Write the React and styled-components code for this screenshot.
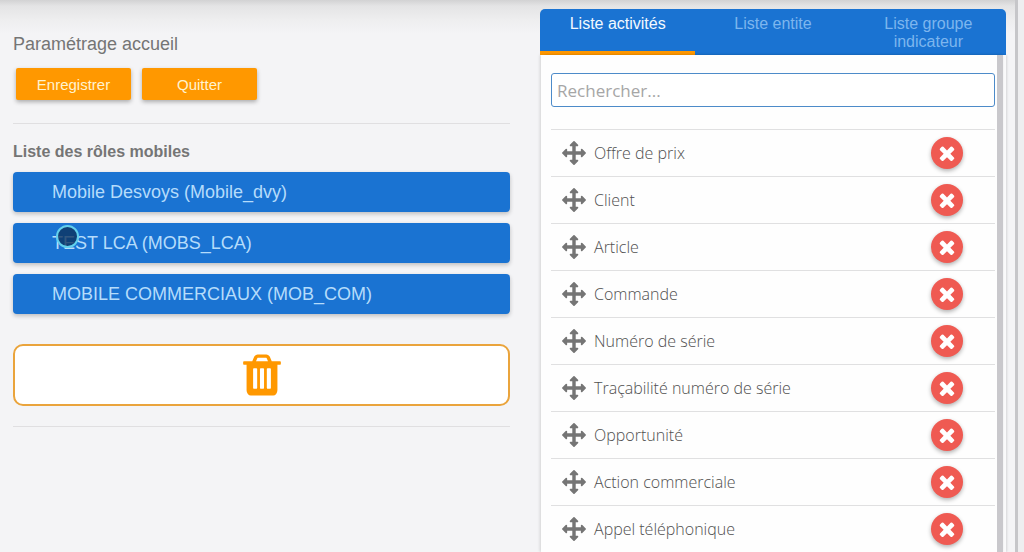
import { useState } from "react";
import styled, { createGlobalStyle } from 'styled-components'

const GlobalStyle = createGlobalStyle`
  * {
    box-sizing: border-box;
  }
  body {
    margin: 0;
    background: #f4f4f6;
    color: #757575;
    font-family: 'Liberation Sans', Arial, sans-serif;
  }
`

const Page = styled.div`
  display: flex;
  height: 100vh;
  overflow: hidden;
  background: linear-gradient(#d2d2d3, #e4e4e5 6px, #eeeeef 20px, #f4f4f6 34px);
`

const Content = styled.main`
  flex: 1;
  display: flex;
  gap: 30px;
  min-width: 0;
  padding: 9px 9px 0 13px;
`

const Settings = styled.section`
  flex: 16 1 0;
  min-width: 0;
  padding-top: 24px;
`

const Title = styled.h1`
  margin: 0 0 13px;
  font-size: 18px;
  font-weight: 400;
  line-height: 22px;
`

const Actions = styled.div`
  display: flex;
  gap: 11px;
  padding: 0 3px;
`

const ActionButton = styled.button`
  width: 115px;
  height: 32px;
  padding: 0;
  border: 0;
  border-radius: 2px;
  background: #ff9800;
  color: #fff3d0;
  font-family: inherit;
  font-size: 15px;
  box-shadow: 0 2px 4px rgba(0, 0, 0, 0.3);
  cursor: pointer;
`

const Divider = styled.hr`
  height: 1px;
  margin: ${({ $top }) => $top}px 0 0;
  border: 0;
  background: #e0dfe1;
`

const SubTitle = styled.h2`
  margin: 18px 0 10px;
  font-size: 16px;
  font-weight: 700;
  line-height: 20px;
`

const Roles = styled.div`
  display: flex;
  flex-direction: column;
  gap: 11px;
`

const RoleButton = styled.button`
  position: relative;
  height: 40px;
  padding: 0 39px;
  border: 0;
  border-radius: 4px;
  background: #1a73d2;
  color: #b5dcfb;
  font-family: inherit;
  font-size: 18px;
  text-align: left;
  box-shadow: 0 2px 4px rgba(0, 0, 0, 0.22);
  cursor: pointer;
`

const Pointer = styled.span`
  position: absolute;
  top: 2px;
  left: 43px;
  width: 23px;
  height: 23px;
  border: 2px solid #62d0ec;
  border-radius: 50%;
  background: rgba(13, 50, 92, 0.78);
`

const TrashZone = styled.button`
  display: flex;
  align-items: center;
  justify-content: center;
  width: 100%;
  height: 62px;
  margin-top: 30px;
  border: 2px solid #eaa43c;
  border-radius: 10px;
  background: #fff;
  color: #ff9800;
`

const Panel = styled.section`
  flex: 15 1 0;
  display: flex;
  flex-direction: column;
  min-width: 0;
`

const Tabs = styled.div`
  display: flex;
  height: 46px;
  flex-shrink: 0;
  overflow: hidden;
  border-radius: 5px 5px 0 0;
  background: #1a73d2;
`

const Tab = styled.button`
  display: flex;
  flex: 1 1 0;
  justify-content: center;
  padding: 6px 20px 0;
  border: 0;
  border-bottom: 4px solid ${({ $active }) => ($active ? '#ff9800' : 'transparent')};
  background: none;
  color: ${({ $active }) => ($active ? '#f2f9ff' : '#7db6ee')};
  font-family: inherit;
  font-size: 16px;
  line-height: 18px;
  cursor: pointer;
`

const PanelBody = styled.div`
  flex: 1;
  min-height: 0;
  margin: 0 3px 0 1px;
  padding: 18px 2px 0 10px;
  overflow: hidden;
  border-right: 6px solid #c9c8cc;
  background: #fefefe;
  box-shadow: -1px 0 3px rgba(0, 0, 0, 0.14), 3px 0 0 #fafafb, 4px 0 2px rgba(0, 0, 0, 0.12);
`

const Search = styled.input`
  display: block;
  width: 100%;
  height: 34px;
  padding: 0 5px;
  border: 1px solid #4d8bc9;
  border-radius: 3px;
  outline: none;
  background: #fff;
  color: #616161;
  font-family: 'Open Sans', sans-serif;
  font-size: 17px;
  font-weight: 500;
  &::placeholder {
    color: #a6a6a6;
    opacity: 1;
  }
`

const List = styled.ul`
  margin: 22px 0 0;
  padding: 0;
  list-style: none;
`

const Row = styled.li`
  display: flex;
  align-items: center;
  height: 47px;
  padding: 0 32px 0 11px;
  border-top: 1px solid #e0e0e1;
  color: #757575;
`

const RowLabel = styled.span`
  flex: 1;
  margin-left: 8px;
  color: #505050;
  font-family: 'Open Sans', sans-serif;
  font-size: 16px;
  font-weight: 300;
`

const RemoveButton = styled.button`
  display: flex;
  align-items: center;
  justify-content: center;
  width: 32px;
  height: 32px;
  padding: 0;
  border: 0;
  border-radius: 50%;
  background: #ef5a52;
  color: #fff;
  box-shadow: 0 2px 4px rgba(0, 0, 0, 0.3);
  cursor: pointer;
`

const PageEdge = styled.div`
  width: 9px;
  border-left: 3px solid #c6c6c9;
  background: #eeeef0;
`

const Svg = styled.svg`
  display: block;
  flex-shrink: 0;
  width: ${({ $size }) => $size}px;
  height: ${({ $size }) => $size}px;
  fill: currentColor;
`

const icons = {
  move: "M1792 896q0 26-19 45l-256 256q-19 19-45 19t-45-19-19-45v-128h-384v384h128q26 0 45 19t19 45-19 45l-256 256q-19 19-45 19t-45-19l-256-256q-19-19-19-45t19-45 45-19h128v-384h-384v128q0 26-19 45t-45 19-45-19l-256-256q-19-19-19-45t19-45l256-256q19-19 45-19t45 19 19 45v128h384v-384h-128q-26 0-45-19t-19-45 19-45l256-256q19-19 45-19t45 19l256 256q19 19 19 45t-19 45-45 19h-128v384h384v-128q0-26 19-45t45-19 45 19l256 256q19 19 19 45z",
  times: "M1490 1322q0 40-28 68l-136 136q-28 28-68 28t-68-28l-294-294-294 294q-28 28-68 28t-68-28l-136-136q-28-28-28-68t28-68l294-294-294-294q-28-28-28-68t28-68l136-136q28-28 68-28t68 28l294 294 294-294q28-28 68-28t68 28l136 136q28 28 28 68t-28 68l-294 294 294 294q28 28 28 68z",
  trash: "M716 1376v-704q0-14-9-23t-23-9h-88q-14 0-23 9t-9 23v704q0 14 9 23t23 9h88q14 0 23-9t9-23zm256 0v-704q0-14-9-23t-23-9h-88q-14 0-23 9t-9 23v704q0 14 9 23t23 9h88q14 0 23-9t9-23zm256 0v-704q0-14-9-23t-23-9h-88q-14 0-23 9t-9 23v704q0 14 9 23t23 9h88q14 0 23-9t9-23zm-556-992h448l-48-117q-7-9-17-11h-317q-10 2-17 11zm928 32v64q0 14-9 23t-23 9h-96v948q0 83-47 143.5t-113 60.5h-832q-66 0-113-58.5t-47-141.5v-952h-96q-14 0-23-9t-9-23v-64q0-14 9-23t23-9h309l70-167q15-37 54-63t79-26h320q40 0 79 26t54 63l70 167h309q14 0 23 9t9 23z",
}

function Icon({ name, size }) {
  return (
    <Svg viewBox="0 0 1792 1792" $size={size} aria-hidden="true">
      <path d={icons[name]} />
    </Svg>
  )
}

const roles = [
  'Mobile Desvoys (Mobile_dvy)',
  'TEST LCA (MOBS_LCA)',
  'MOBILE COMMERCIAUX (MOB_COM)',
]

const tabs = ['Liste activités', 'Liste entite', 'Liste groupe indicateur']

const activities = [
  'Offre de prix',
  'Client',
  'Article',
  'Commande',
  'Numéro de série',
  'Traçabilité numéro de série',
  'Opportunité',
  'Action commerciale',
  'Appel téléphonique',
]

export default function App() {
  const [activeTab, setActiveTab] = useState(0)
  const [items, setItems] = useState(activities)
  const [search, setSearch] = useState('')

  const visible = items.filter((item) => item.toLowerCase().includes(search.toLowerCase()))

  return (
    <Page>
      <GlobalStyle />
      <Content>
        <Settings>
          <Title>Paramétrage accueil</Title>
          <Actions>
            <ActionButton type="button">Enregistrer</ActionButton>
            <ActionButton type="button">Quitter</ActionButton>
          </Actions>
          <Divider $top={23} />
          <SubTitle>Liste des rôles mobiles</SubTitle>
          <Roles>
            {roles.map((role, index) => (
              <RoleButton type="button" key={role}>
                {role}
                {index === 1 && <Pointer />}
              </RoleButton>
            ))}
          </Roles>
          <TrashZone type="button" aria-label="Corbeille">
            <Icon name="trash" size={48} />
          </TrashZone>
          <Divider $top={20} />
        </Settings>
        <Panel>
          <Tabs role="tablist">
            {tabs.map((tab, index) => (
              <Tab
                type="button"
                role="tab"
                key={tab}
                aria-selected={index === activeTab}
                $active={index === activeTab}
                onClick={() => setActiveTab(index)}
              >
                {tab}
              </Tab>
            ))}
          </Tabs>
          <PanelBody>
            <Search
              type="text"
              aria-label="Rechercher"
              placeholder="Rechercher..."
              value={search}
              onChange={(e) => setSearch(e.target.value)}
            />
            <List>
              {visible.map((item) => (
                <Row key={item}>
                  <Icon name="move" size={24} />
                  <RowLabel>{item}</RowLabel>
                  <RemoveButton
                    type="button"
                    aria-label={`Supprimer ${item}`}
                    onClick={() => setItems(items.filter((i) => i !== item))}
                  >
                    <Icon name="times" size={22} />
                  </RemoveButton>
                </Row>
              ))}
            </List>
          </PanelBody>
        </Panel>
      </Content>
      <PageEdge />
    </Page>
  )
}
